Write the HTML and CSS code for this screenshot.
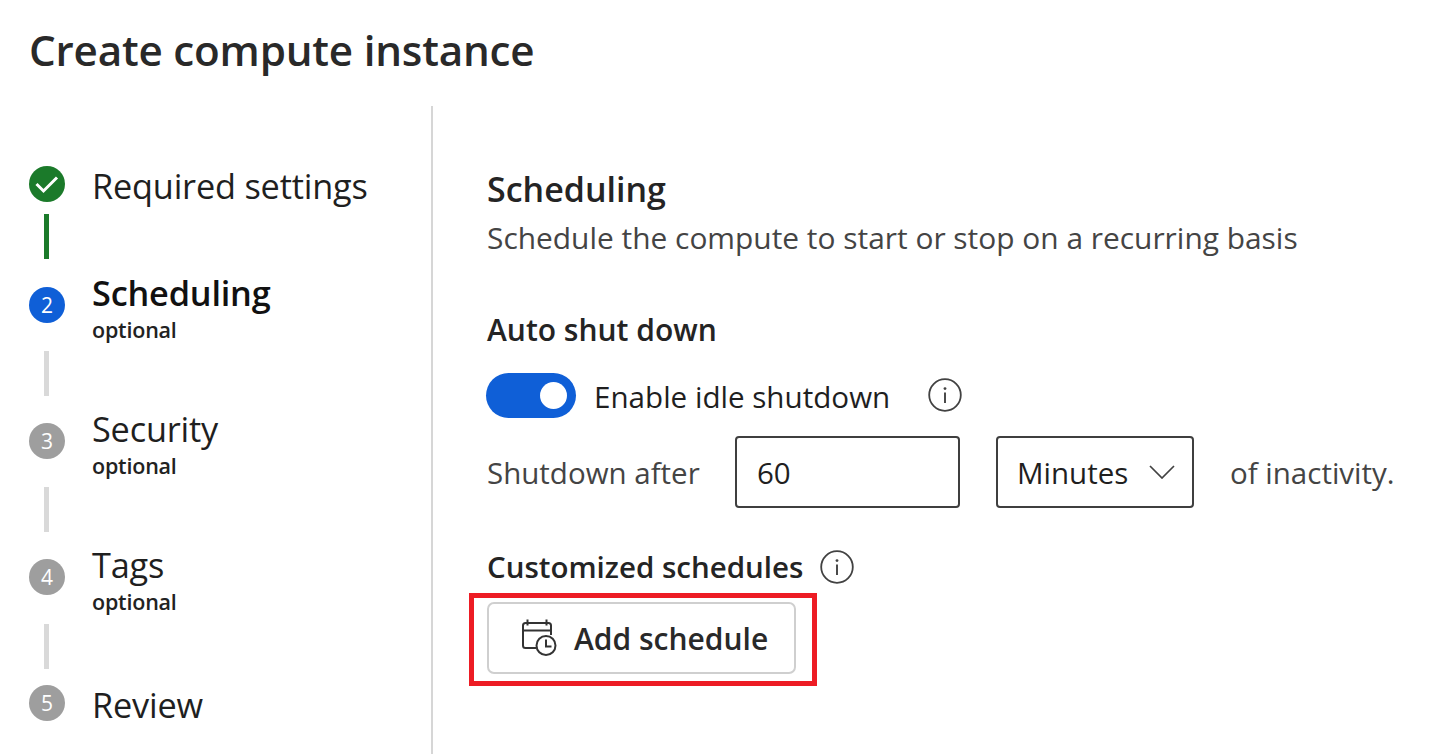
FILE: index.html
```html
<!DOCTYPE html>
<html lang="en">
<head>
<meta charset="utf-8">
<title>Create compute instance</title>
<link rel="stylesheet" href="styles.css">
</head>
<body>
<h1 class="title">Create compute instance</h1>
<div class="layout">
  <nav class="stepper">
    <div class="step step-first">
      <div class="rail">
        <span class="dot dot-done"><svg width="36" height="36" viewBox="0 0 36 36"><path d="M7.500 18l7 7L28 11.500" fill="none" stroke="#fff" stroke-width="3"/></svg></span>
        <span class="line line-first line-done"></span>
      </div>
      <div class="label"><div class="name">Required settings</div></div>
    </div>
    <div class="step step-mid">
      <div class="rail">
        <span class="dot dot-active">2</span>
        <span class="line"></span>
      </div>
      <div class="label"><div class="name name-active">Scheduling</div><div class="sub">optional</div></div>
    </div>
    <div class="step step-mid">
      <div class="rail">
        <span class="dot">3</span>
        <span class="line"></span>
      </div>
      <div class="label"><div class="name">Security</div><div class="sub">optional</div></div>
    </div>
    <div class="step step-tags">
      <div class="rail">
        <span class="dot">4</span>
        <span class="line line-tags"></span>
      </div>
      <div class="label"><div class="name">Tags</div><div class="sub">optional</div></div>
    </div>
    <div class="step step-last">
      <div class="rail"><span class="dot">5</span></div>
      <div class="label"><div class="name">Review</div></div>
    </div>
  </nav>
  <main class="content">
    <h2 class="section-title">Scheduling</h2>
    <p class="section-desc">Schedule the compute to start or stop on a recurring basis</p>
    <h3 class="sub-title">Auto shut down</h3>
    <div class="toggle-row">
      <span class="toggle"><span class="knob"></span></span>
      <span class="toggle-label">Enable idle shutdown</span>
      <svg class="info info-toggle" width="34" height="34" viewBox="0 0 34 34"><circle cx="17" cy="17" r="15.800" fill="none" stroke="#424242" stroke-width="1.800"/><circle cx="17" cy="10.600" r="1.400" fill="#424242"/><path d="M17 14.500v10.500" stroke="#424242" stroke-width="1.900" fill="none"/></svg>
    </div>
    <div class="shutdown-row">
      <span class="muted shutdown-label">Shutdown after</span>
      <span class="field field-num">60</span>
      <span class="field field-select">Minutes
        <svg class="chevron" width="26" height="14" viewBox="0 0 26 14"><path d="M1 1l12 12L25 1" fill="none" stroke="#424242" stroke-width="1.700"/></svg>
      </span>
      <span class="muted">of inactivity.</span>
    </div>
    <div class="custom-row">
      <h3 class="sub-title sub-inline">Customized schedules</h3>
      <svg class="info" width="34" height="34" viewBox="0 0 34 34"><circle cx="17" cy="17" r="15.800" fill="none" stroke="#424242" stroke-width="1.800"/><circle cx="17" cy="10.600" r="1.400" fill="#424242"/><path d="M17 14.500v10.500" stroke="#424242" stroke-width="1.900" fill="none"/></svg>
    </div>
    <div class="highlight">
      <button class="add-btn" type="button">
        <svg width="36" height="38" viewBox="0 0 36 38"><g fill="none" stroke="#333" stroke-width="2"><path d="M15 29H4.500A2.500 2.500 0 0 1 2 26.500v-20A2.500 2.500 0 0 1 4.500 4h23A2.500 2.500 0 0 1 30 6.500V16"/><path d="M2 11.500h28M6.500 0.500v6M25.500 0.500v6"/><circle cx="25" cy="26.500" r="9.500"/><path d="M25 20.500V27.500h5.500"/></g></svg>
        <span>Add schedule</span>
      </button>
    </div>
  </main>
</div>
</body>
</html>
```
FILE: styles.css
```css
* { box-sizing: border-box; }
html, body { margin: 0; height: 100%; overflow: hidden; background: #fff; }
body { font-family: "Open Sans", "Noto Sans", "Liberation Sans", sans-serif; color: #242424; }

.title { margin: 0; padding: 22px 0 0 29px; height: 106px; font-size: 42.200px; line-height: 56px; font-weight: 600; color: #292929; letter-spacing: -0.2px; }

.layout { display: flex; height: 648px; }

.stepper { width: 433px; flex: none; border-right: 2px solid #d6d6d6; padding: 60px 0 0 29px; }
.step-first { height: 121px; }
.step-mid { height: 136px; }
.step-tags { height: 126px; }
.step { display: flex; }
.rail { width: 36px; flex: none; display: flex; flex-direction: column; align-items: center; }
.dot { width: 36px; height: 36px; flex: none; border-radius: 50%; background: #9e9e9e; color: #fff; display: flex; align-items: center; justify-content: center; font-size: 21px; }
.dot-done { background: #1b7a2a; }
.dot-active { background: #0f5fd7; }
.line { width: 5px; height: 45px; margin: 28px 2px 0 0; background: #d9d9d9; flex: none; }
.line-first { margin-top: 12px; }
.line-done { background: #1b7a2a; }
.line-tags { margin-top: 29px; }
.label { margin-left: 27px; margin-top: -2px; }
.name { font-size: 34.300px; line-height: 44px; color: #1f1f1f; letter-spacing: -0.2px; white-space: nowrap; }
.name-active { font-weight: 600; color: #111; }
.sub { font-size: 21.500px; line-height: 26px; font-weight: 600; color: #222; margin-top: 2px; letter-spacing: -0.2px; }
.step-mid .label, .step-tags .label { margin-top: -16px; }

.content { flex: 1; padding: 60px 0 0 54px; min-width: 0; }
.section-title { margin: 0; font-size: 34px; line-height: 46px; font-weight: 600; color: #242424; }
.section-desc { margin: 6px 0 0; font-size: 29.900px; line-height: 40px; color: #444; white-space: nowrap; }
.sub-title { margin: 52px 0 0; font-size: 30px; line-height: 40px; font-weight: 600; color: #242424; }
.sub-inline { margin: 0; font-size: 29.500px; white-space: nowrap; }

.toggle-row { display: flex; align-items: center; margin: 22px 0 0 -1px; height: 46px; }
.toggle { width: 90px; height: 45px; border-radius: 23px; background: #0f5fd7; display: flex; align-items: center; justify-content: flex-end; padding-right: 9px; flex: none; }
.knob { width: 27px; height: 27px; border-radius: 50%; background: #fff; }
.toggle-label { margin-left: 18px; padding-top: 2px; font-size: 29.600px; color: #1f1f1f; white-space: nowrap; }
.info-toggle { margin-left: 38px; }

.shutdown-row { display: flex; align-items: center; margin-top: 18px; height: 72px; font-size: 29.500px; }
.muted { color: #444; white-space: nowrap; }
.shutdown-label { width: 248px; flex: none; }
.field { height: 72px; border: 2px solid #3f3f3f; border-radius: 4px; display: flex; align-items: center; color: #1f1f1f; background: #fff; flex: none; }
.field-num { width: 225px; padding-left: 20px; }
.field-select { width: 198px; margin: 0 36px; padding-left: 19px; justify-content: space-between; padding-right: 17px; }
.chevron { flex: none; }

.custom-row { display: flex; align-items: center; margin-top: 39px; height: 40px; gap: 17px; }

.highlight { display: inline-block; margin: 6px 0 0 -18px; width: 348px; height: 93px; border: 5px solid #ed1c24; padding: 4px 0 0 13px; }
.add-btn { width: 309px; height: 72px; border: 2px solid #cfcfcf; border-radius: 7px; background: #fff; display: flex; align-items: center; padding: 0 0 0 32px; gap: 17px; font: 600 30px "Open Sans", "Noto Sans", sans-serif; color: #292929; white-space: nowrap; }
```
